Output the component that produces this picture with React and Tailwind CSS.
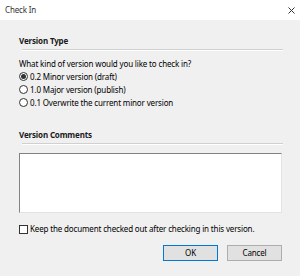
import React from "react";

const Radio = ({ checked, label }) => (
  <div className="flex h-[13px] items-center">
    <span className="flex h-[9px] w-[9px] items-center justify-center rounded-full border border-[#333333] bg-white">
      {checked && <span className="h-[5px] w-[5px] rounded-full bg-[#333333]" />}
    </span>
    <span className="ml-[2px]">{label}</span>
  </div>
);

const SectionHeader = ({ title, className }) => (
  <div className={className}>
    <div className="h-[12px] font-bold leading-[12px] text-[#1a1a1a]">{title}</div>
    <div className="ml-[3px] mt-[2px] h-[2px] border-t border-[#d0d0d0] border-b border-b-white" />
  </div>
);

export default function App() {
  return (
    <div className="flex h-[276px] w-[300px] flex-col bg-[#f0f0f0] text-[8px] leading-[12px] tracking-[-0.15px] text-[#000000] [font-family:'Noto_Sans',sans-serif]">
      <div className="flex h-[20px] items-center justify-between bg-white pl-[5px] pr-[5px] text-[#333333]">
        <span>Check In</span>
        <svg width="7" height="7" viewBox="0 0 7 7" className="text-[#333333]">
          <path d="M0.5 0.5L6.5 6.5M6.5 0.5L0.5 6.5" stroke="currentColor" strokeWidth="1" />
        </svg>
      </div>

      <div className="flex flex-col pl-[19px] pr-[17px]">
        <SectionHeader title="Version Type" className="mt-[15px]" />
        <div className="mt-[7px] h-[12px]">What kind of version would you like to check in?</div>
        <div className="flex flex-col">
          <Radio checked label="0.2 Minor version (draft)" />
          <Radio label="1.0 Major version (publish)" />
          <Radio label="0.1 Overwrite the current minor version" />
        </div>

        <SectionHeader title="Version Comments" className="mt-[20px]" />
        <div className="mt-[8px] h-[60px] w-[263px] border border-t-[#828282] border-l-[#828282] border-r-[#e3e3e3] border-b-[#e3e3e3] bg-white" />

        <div className="mt-[11px] flex h-[10px] items-center">
          <span className="h-[9px] w-[9px] border border-[#333333] bg-white" />
          <span className="ml-[2px]">Keep the document checked out after checking in this version.</span>
        </div>

        <div className="mt-[11px] flex justify-end gap-[9px] pr-[1px]">
          <button className="h-[16px] w-[55px] border border-[#0078d7] bg-[#e1e1e1] text-[8px] leading-[12px]">OK</button>
          <button className="h-[16px] w-[55px] border border-[#adadad] bg-[#e1e1e1] text-[8px] leading-[12px]">Cancel</button>
        </div>
      </div>
    </div>
  );
}
